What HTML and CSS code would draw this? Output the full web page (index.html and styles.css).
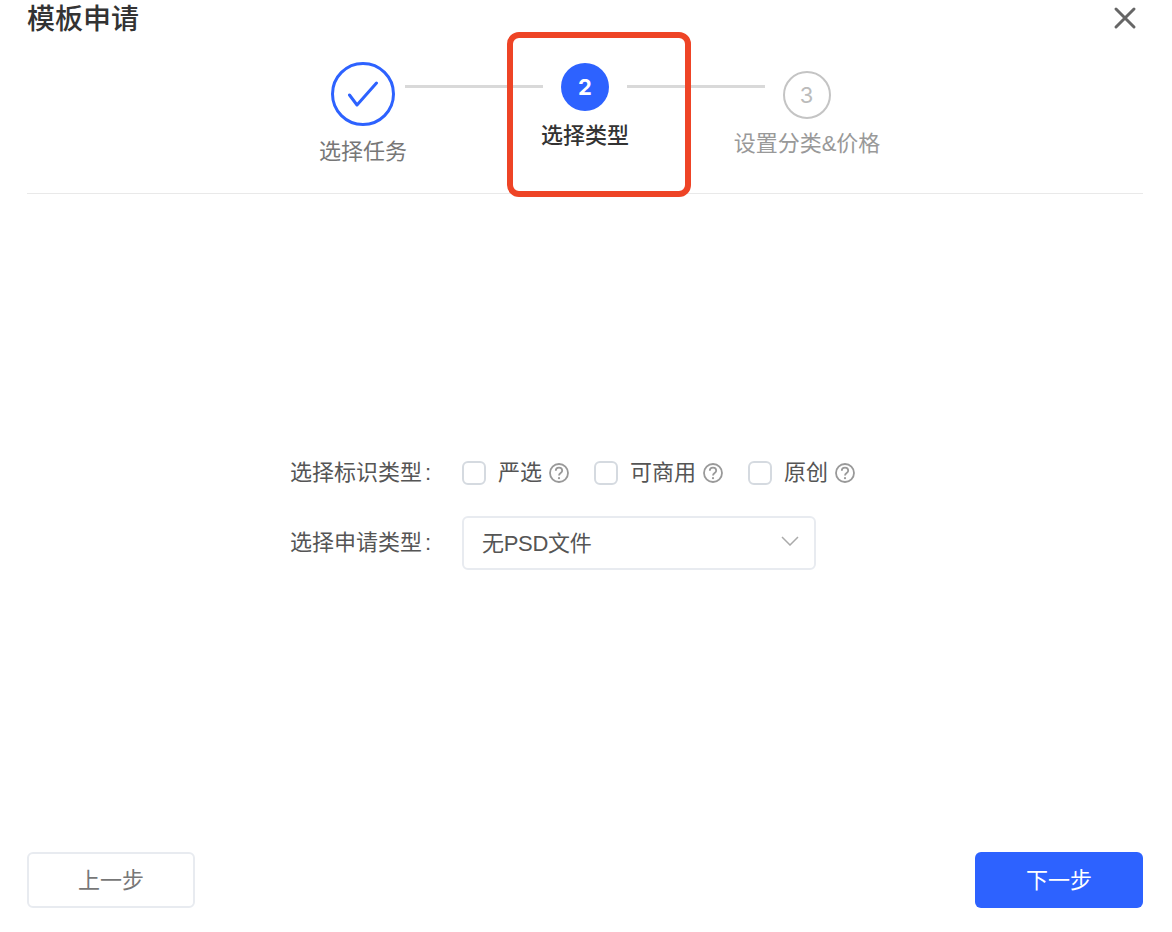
FILE: index.html
```html
<!DOCTYPE html>
<html lang="zh-CN">
<head>
<meta charset="utf-8">
<title>模板申请</title>
<link rel="stylesheet" href="styles.css">
</head>
<body>
<div class="dialog">
  <header class="header">
    <div class="title-row">
      <h1 class="title">模板申请</h1>
      <svg class="close" viewBox="0 0 24 24" width="24" height="24"><path d="M3 3 L21 21 M21 3 L3 21"/></svg>
    </div>
    <div class="steps">
      <div class="step step-done">
        <div class="circle circle-done"><svg viewBox="0 0 32 26" width="32" height="26"><path d="M2.5 14 L10 24 L29.5 2"/></svg></div>
        <div class="step-label">选择任务</div>
      </div>
      <div class="connector"></div>
      <div class="step step-active">
        <div class="circle circle-active">2</div>
        <div class="step-label">选择类型</div>
      </div>
      <div class="connector"></div>
      <div class="step step-todo">
        <div class="circle circle-todo">3</div>
        <div class="step-label">设置分类&amp;价格</div>
      </div>
    </div>
    <div class="highlight"></div>
  </header>
  <main class="form">
    <div class="form-row row-types">
      <span class="form-label">选择标识类型<span class="colon">:</span></span>
      <div class="options">
        <span class="option">
          <span class="checkbox"></span><span class="option-text">严选</span>
          <svg class="help" viewBox="0 0 20 20" width="20" height="20"><circle cx="10" cy="10" r="9"/><path d="M6.8 7.8 C6.8 3.5 13.2 3.5 13.2 7.8 C13.2 10.2 10 10 10 12.6"/><circle class="dot" cx="10" cy="15.2" r="1.1"/></svg>
        </span>
        <span class="option">
          <span class="checkbox"></span><span class="option-text">可商用</span>
          <svg class="help" viewBox="0 0 20 20" width="20" height="20"><circle cx="10" cy="10" r="9"/><path d="M6.8 7.8 C6.8 3.5 13.2 3.5 13.2 7.8 C13.2 10.2 10 10 10 12.6"/><circle class="dot" cx="10" cy="15.2" r="1.1"/></svg>
        </span>
        <span class="option">
          <span class="checkbox"></span><span class="option-text">原创</span>
          <svg class="help" viewBox="0 0 20 20" width="20" height="20"><circle cx="10" cy="10" r="9"/><path d="M6.8 7.8 C6.8 3.5 13.2 3.5 13.2 7.8 C13.2 10.2 10 10 10 12.6"/><circle class="dot" cx="10" cy="15.2" r="1.1"/></svg>
        </span>
      </div>
    </div>
    <div class="form-row row-select">
      <span class="form-label">选择申请类型<span class="colon">:</span></span>
      <div class="select">
        <span class="select-value">无PSD文件</span>
        <svg class="chevron" viewBox="0 0 18 10" width="18" height="10"><path d="M1 1 L9 9 L17 1"/></svg>
      </div>
    </div>
  </main>
  <footer class="footer">
    <button class="btn btn-default">上一步</button>
    <button class="btn btn-primary">下一步</button>
  </footer>
</div>
</body>
</html>
```
FILE: styles.css
```css
* { box-sizing: border-box; }
html, body { margin: 0; padding: 0; background: #fff; }
body {
  font-family: "Liberation Sans", "Noto Sans CJK SC", sans-serif;
  color: #333;
  overflow: hidden;
}
.dialog {
  width: 1172px;
  height: 932px;
  padding: 0 29px 24px 27px;
  display: flex;
  flex-direction: column;
}
.header {
  position: relative;
  height: 194px;
  border-bottom: 1px solid #e9e9e9;
  flex: none;
}
.title-row {
  display: flex;
  justify-content: space-between;
  align-items: flex-start;
  height: 36px;
}
.title {
  margin: 2px 0 0 0;
  font-size: 28px;
  line-height: 36px;
  font-weight: 500;
  color: #333;
}
.close { margin: 6px 6px 0 0; }
.close path { fill: none; stroke: #666; stroke-width: 3; stroke-linecap: round; }
.steps {
  display: flex;
  justify-content: center;
  margin-top: 26px;
}
.step {
  width: 88px;
  display: flex;
  flex-direction: column;
  align-items: center;
  flex: none;
}
.step-active { margin-top: 1px; }
.step-todo { margin-top: 9px; }
.connector {
  width: 138px;
  height: 3px;
  margin: 23px -2px 0;
  background: #d9d9d9;
  flex: none;
}
.circle {
  display: flex;
  align-items: center;
  justify-content: center;
  border-radius: 50%;
  font-family: "Inter", "Liberation Sans", sans-serif;
  font-size: 22px;
  flex: none;
}
.circle-done { width: 64px; height: 64px; border: 3px solid #2d62ff; }
.circle-done svg path { fill: none; stroke: #2d62ff; stroke-width: 3; stroke-linecap: round; stroke-linejoin: round; }
.circle-active { width: 48px; height: 48px; background: #2d62ff; color: #fff; font-weight: 700; }
.circle-todo { width: 48px; height: 48px; border: 2px solid #c4c4c4; color: #bbb; padding-right: 1px; }
.step-label {
  font-size: 22px;
  line-height: 30px;
  margin-top: 10px;
  white-space: nowrap;
}
.step-done .step-label { color: #777; margin-top: 11px; }
.step-active .step-label { color: #333; font-weight: 500; }
.step-todo .step-label { color: #999; margin-top: 10px; }
.highlight {
  position: absolute;
  left: 480px;
  top: 32px;
  width: 184px;
  height: 165px;
  border: 6px solid #ee4426;
  border-radius: 12px;
}
.form {
  flex: 1;
  padding: 261px 0 0 263px;
}
.form-row {
  display: flex;
  align-items: center;
  font-size: 22px;
  color: #555;
}
.row-types { height: 36px; }
.row-select { margin-top: 25px; }
.form-label {
  width: 172px;
  flex: none;
  line-height: 30px;
}
.colon { margin-left: 3px; }
.options { display: flex; align-items: center; gap: 25px; }
.option { display: flex; align-items: center; }
.checkbox {
  width: 24px;
  height: 24px;
  border: 2px solid #d5dae0;
  border-radius: 6px;
  margin-right: 12px;
  flex: none;
}
.option-text { line-height: 30px; }
.help { margin-left: 7px; flex: none; }
.help circle, .help path { fill: none; stroke: #999; stroke-width: 1.8; }
.help .dot { fill: #999; stroke: none; }
.select {
  width: 354px;
  height: 54px;
  border: 2px solid #e8ebf0;
  border-radius: 6px;
  padding: 0 15px 4px 18px;
  display: flex;
  align-items: center;
  justify-content: space-between;
}
.select-value { letter-spacing: -0.3px; }
.chevron path { fill: none; stroke: #aaa; stroke-width: 1.5; }
.footer {
  display: flex;
  justify-content: space-between;
  flex: none;
}
.btn {
  width: 168px;
  height: 56px;
  border-radius: 6px;
  font-family: inherit;
  font-size: 22px;
  padding: 0 0 4px;
}
.btn-default { background: #fff; border: 2px solid #e8ebf0; color: #777; }
.btn-primary { background: #2d62ff; border: 0; color: #fff; }
```
